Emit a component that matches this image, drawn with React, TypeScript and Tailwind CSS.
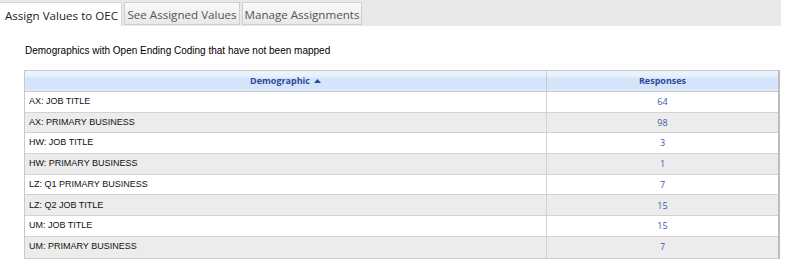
import React from "react";

const rows: [string, number][] = [
  ["AX: JOB TITLE", 64],
  ["AX: PRIMARY BUSINESS", 98],
  ["HW: JOB TITLE", 3],
  ["HW: PRIMARY BUSINESS", 1],
  ["LZ: Q1 PRIMARY BUSINESS", 7],
  ["LZ: Q2 JOB TITLE", 15],
  ["UM: JOB TITLE", 15],
  ["UM: PRIMARY BUSINESS", 7],
];

export default function App() {
  return (
    <div className="w-[785px] h-[261px] bg-white overflow-hidden">
      <div className="w-[781px] h-[26px] bg-[#e9e9e9] flex items-end gap-[2px] pl-0">
        <div className="h-[24px] w-[122px] bg-white border-t border-r border-[#d6d6d6] flex items-center justify-center pl-[2px] pt-[2px] text-[11.6px] text-[#222] [font-family:'Open_Sans',sans-serif]">
          Assign Values to OEC
        </div>
        <div className="h-[23px] w-[116px] mb-[1px] bg-gradient-to-b from-[#fafafa] to-[#e8e8e8] border border-[#cfcfcf] flex items-center justify-center pt-[2px] text-[11.6px] text-[#555] [font-family:'Open_Sans',sans-serif]">
          See Assigned Values
        </div>
        <div className="h-[23px] w-[120px] mb-[1px] bg-gradient-to-b from-[#fafafa] to-[#e8e8e8] border border-[#cfcfcf] flex items-center justify-center pt-[2px] text-[11.6px] text-[#555] [font-family:'Open_Sans',sans-serif]">
          Manage Assignments
        </div>
      </div>
      <div className="pl-[25px] pt-[19px] text-[10px] text-black [font-family:'Liberation_Sans',Arial,sans-serif] leading-[12px]">
        Demographics with Open Ending Coding that have not been mapped
      </div>
      <div className="ml-[24px] mt-[13px] w-[756px] border border-[#c9c9c9] border-r-2 border-r-[#bdbdbd]">
        <div className="flex h-[21px] border-b border-[#c9c9c9] bg-[linear-gradient(to_bottom,#eef4fd_0%,#e6effc_30%,#d4e4fa_35%,#d4e4fa_85%,#e4eefc_100%)] text-[9px] font-bold text-[#32489a] [font-family:'Open_Sans',sans-serif]">
          <div className="w-[522px] border-r border-[#c9c9c9] flex items-center justify-center gap-[4px]">
            Demographic
            <svg width="7" height="4" viewBox="0 0 7 4"><path d="M0 4 L3.5 0 L7 4 Z" fill="#32489a" /></svg>
          </div>
          <div className="flex-1 flex items-center justify-center">Responses</div>
        </div>
        {rows.map(([name, n], i) => (
          <div
            key={name}
            className={`flex h-[20.7px] ${i < rows.length - 1 ? "border-b border-[#d2d2d2]" : ""} ${i % 2 === 1 ? "bg-[#ececec]" : "bg-white"}`}
          >
            <div className="w-[522px] border-r border-[#d2d2d2] flex items-center pl-[4px] text-[9px] text-[#111] [font-family:'Liberation_Sans',Arial,sans-serif]">
              {name}
            </div>
            <div className="flex-1 flex items-center justify-center text-[9px] text-[#3c5aa8] [font-family:'Open_Sans',sans-serif]">
              {n}
            </div>
          </div>
        ))}
      </div>
    </div>
  );
}
